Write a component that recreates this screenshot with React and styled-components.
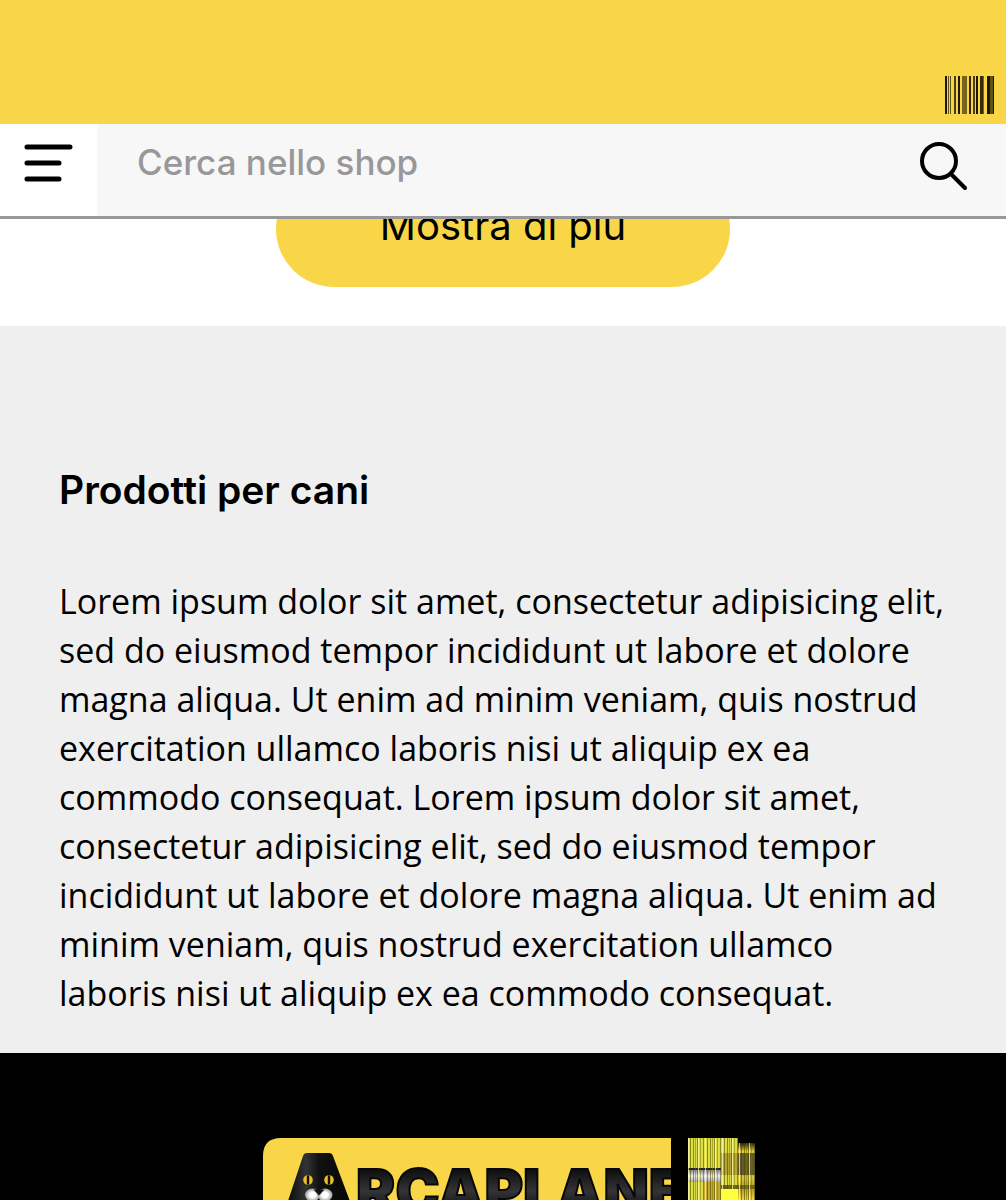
import React from "react";
import styled, { createGlobalStyle } from "styled-components";

const yellow = "#f9d648";
const rounded = `Inter, "Open Sans", sans-serif`;

const GlobalStyle = createGlobalStyle`
  *, *::before, *::after { box-sizing: border-box; }
  body { margin: 0; background: #fff; color: #000; font-family: "Open Sans", sans-serif; }
`;

const Header = styled.header`
  position: fixed;
  inset: 0 0 auto;
  z-index: 1;
  background: #fff;
  border-bottom: 3px solid #98989b;
`;

const TopBar = styled.div`
  display: flex;
  justify-content: flex-end;
  align-items: flex-end;
  height: 124px;
  padding: 10px 12px;
  background: ${yellow};
`;

const SearchRow = styled.div`
  display: flex;
  height: 92px;
`;

const IconButton = styled.button`
  display: flex;
  align-items: flex-start;
  justify-content: center;
  width: ${(p) => p.$width}px;
  padding: 18px 0 0;
  border: 0;
  background: transparent;
  color: inherit;
`;

const SearchForm = styled.form`
  display: flex;
  flex: 1;
  background: #f7f7f7;
`;

const SearchInput = styled.input`
  flex: 1;
  min-width: 0;
  padding: 0 40px 16px;
  border: 0;
  background: transparent;
  font: 500 35px ${rounded};
  &::placeholder { color: #98989a; opacity: 1; }
`;

const Listing = styled.section`
  display: flex;
  justify-content: center;
  padding: 171px 40px 39px;
`;

const MoreButton = styled.button`
  width: 454px;
  height: 116px;
  padding: 0 0 8px;
  border: 0;
  border-radius: 58px;
  background: ${yellow};
  color: #000;
  font: 400 40px ${rounded};
`;

const Description = styled.section`
  padding: 140px 59px 35px;
  background: #efefef;
`;

const Title = styled.h1`
  margin: 0 0 63px;
  font: 600 39px/48px ${rounded};
`;

const Copy = styled.p`
  margin: 0;
  font-size: 34px;
  line-height: 49px;
`;

const Footer = styled.footer`
  display: flex;
  justify-content: center;
  padding: 84px 0 0 12px;
  background: #000;
`;

const bars = [
  [0, 2, 1], [3, 1, 0.7], [5, 1, 0.7], [9, 2, 0.8], [13, 2, 1], [17, 5, 0.6], [24, 2, 0.9],
  [28, 2, 0.8], [31, 2, 1], [35, 3, 0.9], [38, 1, 0.6], [42, 3, 1], [45, 3, 0.7], [48, 1, 1],
];

function Barcode() {
  return (
    <svg width="49" height="38" viewBox="0 0 49 38" aria-hidden="true">
      {bars.map(([x, w, o]) => (
        <rect key={x} x={x} width={w} height="38" fill="#201800" opacity={o} />
      ))}
    </svg>
  );
}

function Logo() {
  return (
    <svg width="493" height="63" viewBox="263 1137 493 63" role="img" aria-label="Arcaplanet">
      <defs>
        <clipPath id="plate"><path d="M263 1200v-44q0-18 18-18h390v62z" /></clipPath>
        <linearGradient id="ink" gradientUnits="userSpaceOnUse" x1="0" y1="1153" x2="0" y2="1204">
          <stop offset="0" stopColor="#0c0c0d" /><stop offset="0.35" stopColor="#111" />
          <stop offset="0.75" stopColor="#343438" /><stop offset="1" stopColor="#1a1a1c" />
        </linearGradient>
        <linearGradient id="fur" x1="0" y1="0" x2="1" y2="0">
          <stop offset="0" stopColor="#0a0a0a" /><stop offset="0.3" stopColor="#333" />
          <stop offset="0.5" stopColor="#111" /><stop offset="1" stopColor="#060606" />
        </linearGradient>
        <radialGradient id="muzzle"><stop offset="0.4" stopColor="#fff" /><stop offset="1" stopColor="#999" /></radialGradient>
        <linearGradient id="gold" x1="0" y1="0" x2="0" y2="1">
          <stop offset="0" stopColor="#211b04" /><stop offset="0.15" stopColor="#e5c93e" />
          <stop offset="0.4" stopColor="#8d7927" /><stop offset="0.6" stopColor="#d6c639" />
          <stop offset="0.8" stopColor="#b49a2d" /><stop offset="1" stopColor="#f0d63c" />
        </linearGradient>
        <linearGradient id="silver" x1="0" y1="0" x2="0" y2="1">
          <stop offset="0" stopColor="#888" /><stop offset="0.5" stopColor="#eee" /><stop offset="1" stopColor="#aaa" />
        </linearGradient>
        <pattern id="stripes" x="688" width="17" height="8" patternUnits="userSpaceOnUse">
          <path d="M0.500 0v8M10.500 0v8" stroke="#ffffb0" opacity="0.7" />
          <path d="M2.500 0v8M5.500 0v8M9.500 0v8M15.500 0v8" stroke="#454500" opacity="0.55" />
          <path d="M7.500 0v8M12.500 0v8" stroke="#777300" opacity="0.5" />
        </pattern>
      </defs>
      <g clipPath="url(#plate)">
        <rect x="263" y="1138" width="408" height="62" fill={yellow} />
        <path d="M287 1204L303 1156q1-3 4-3h22q3 0 4 3l18 48z" fill="url(#fur)" />
        <circle cx="308" cy="1180" r="4.800" fill="#e8bd31" /><circle cx="329" cy="1180" r="4.800" fill="#e8bd31" />
        <path d="M308 1176.500v7M329 1176.500v7" stroke="#171205" strokeWidth="2.400" strokeLinecap="round" />
        <ellipse cx="312.500" cy="1195" rx="7.500" ry="6.500" fill="url(#muzzle)" />
        <ellipse cx="325" cy="1195" rx="7.500" ry="6.500" fill="url(#muzzle)" />
        <path d="M313.500 1189.500h11l-5.500 6z" fill="#111" />
        <text x="356" y="1212" fill="url(#ink)" stroke="#080808" strokeWidth="2" fontFamily="Inter, sans-serif" fontWeight="900" fontSize="59">RCAPLANE</text>
      </g>
      <rect x="688" y="1138" width="50" height="62" fill="#dede44" />
      <rect x="738" y="1143" width="17" height="57" fill="url(#gold)" />
      <path d="M688 1169h33" stroke="#222" strokeWidth="2" />
      <rect x="688" y="1170" width="33" height="12" fill="url(#silver)" />
      <rect x="704" y="1182" width="17" height="18" fill="#c4a932" />
      <rect x="721" y="1153" width="17" height="22" fill="#b6a334" />
      <rect x="738" y="1153" width="17" height="22" fill="#625a28" />
      <rect x="721" y="1185" width="34" height="4" fill="#6e671c" />
      <rect x="688" y="1138" width="50" height="62" fill="url(#stripes)" />
      <rect x="738" y="1143" width="17" height="57" fill="url(#stripes)" />
      <rect x="721" y="1189" width="17" height="11" fill="#ffff3c" />
    </svg>
  );
}

export default function App() {
  return (
    <>
      <GlobalStyle />
      <Header>
        <TopBar><Barcode /></TopBar>
        <SearchRow>
          <IconButton type="button" aria-label="Apri il menu" $width={97}>
            <svg width="50" height="40" fill="none" stroke="#000" strokeWidth="5" strokeLinecap="round">
              <path d="M3 5h43M3 21h32M3 37h32" />
            </svg>
          </IconButton>
          <SearchForm role="search">
            <SearchInput type="search" aria-label="Cerca nello shop" placeholder="Cerca nello shop" />
            <IconButton type="button" aria-label="Cerca" $width={126}>
              <svg width="50" height="50" fill="none" stroke="#000" strokeWidth="4" strokeLinecap="round">
                <circle cx="21" cy="19" r="17" /><path d="M34 33l13 13" />
              </svg>
            </IconButton>
          </SearchForm>
        </SearchRow>
      </Header>
      <main>
        <Listing><MoreButton type="button">Mostra di più</MoreButton></Listing>
        <Description>
          <Title>Prodotti per cani</Title>
          <Copy>
            Lorem ipsum dolor sit amet, consectetur adipisicing elit, sed do eiusmod tempor incididunt ut
            labore et dolore magna aliqua. Ut enim ad minim veniam, quis nostrud exercitation ullamco
            laboris nisi ut aliquip ex ea commodo consequat. Lorem ipsum dolor sit amet, consectetur
            adipisicing elit, sed do eiusmod tempor incididunt ut labore et dolore magna aliqua. Ut enim
            ad minim veniam, quis nostrud exercitation ullamco laboris nisi ut aliquip ex ea commodo
            consequat.
          </Copy>
        </Description>
      </main>
      <Footer><Logo /></Footer>
    </>
  );
}
